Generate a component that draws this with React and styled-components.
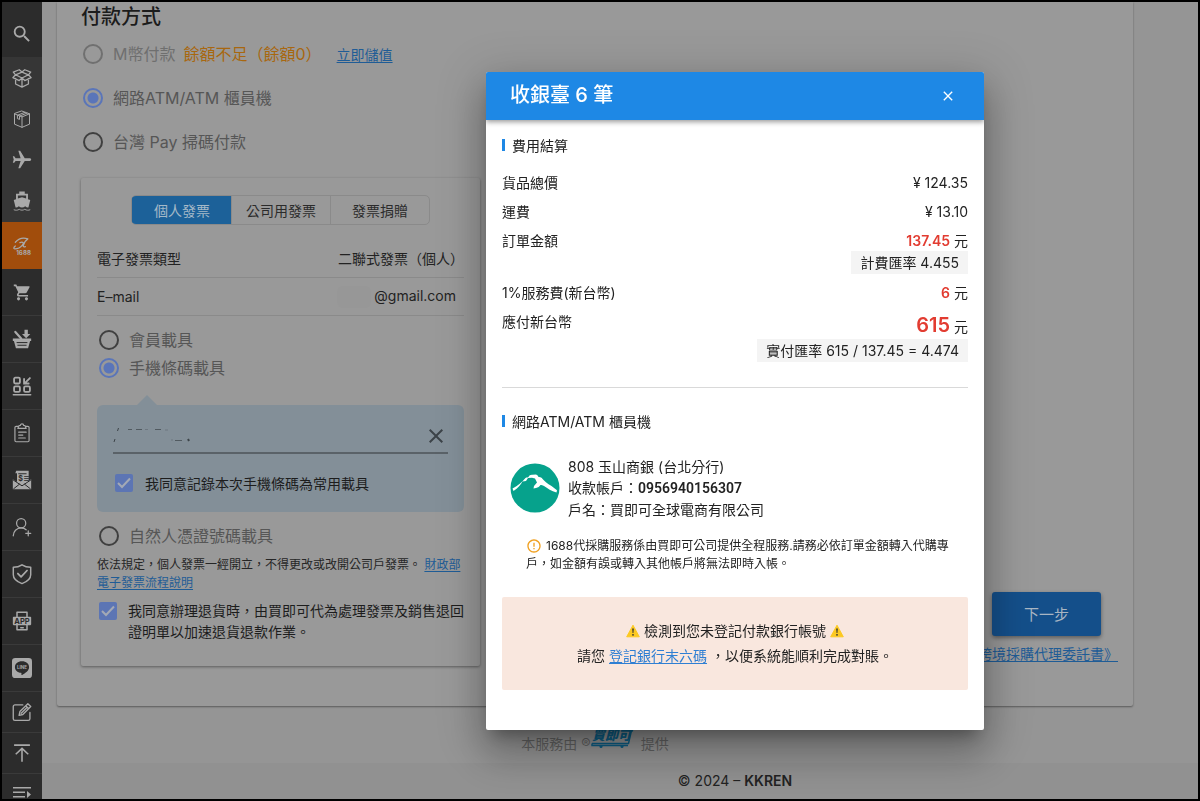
import React from "react";
import styled, { createGlobalStyle, css } from "styled-components";
import {
  MdSearch,
  MdShoppingCart,
  MdFlight,
  MdClose,
  MdErrorOutline,
} from "react-icons/md";

const GlobalStyle = createGlobalStyle`
  *, *::before, *::after { box-sizing: border-box; }
  body {
    margin: 0;
    background: #000;
    color: #222;
    font-family: Inter, "Noto Sans CJK TC", "Liberation Sans", sans-serif;
    font-size: 14px;
    line-height: 21px;
  }
  button, input { font: inherit; color: inherit; }
`;

const Frame = styled.div`
  display: flex;
  height: 100vh;
  border: 2px solid #000;
  overflow: hidden;
  background: #959595;
`;

/* ---------- side navigation ---------- */

const Side = styled.nav`
  flex: 0 0 40px;
  display: flex;
  flex-direction: column;
  overflow: hidden;
  background: #2c2c2c;
`;

const SideGroup = styled.div`
  flex: none;
  padding-bottom: 1px;
  background: #363636;
`;

const heights = { search: 55, group: 41, tall: 47, short: 41 };

const SideButton = styled.button`
  flex: none;
  display: flex;
  align-items: center;
  justify-content: center;
  width: 100%;
  height: ${(p) => heights[p.$kind]}px;
  padding: ${(p) => (p.$kind === "search" ? "9px 0 0" : "0")};
  border: 0;
  border-bottom: ${(p) => (p.$line ? "1px solid #3a3a3a" : "0")};
  background: ${(p) => (p.$active ? "#a14d0c" : "transparent")};
  color: #a9a9a9;
`;

/* ---------- page ---------- */

const Main = styled.main`
  flex: 1;
  min-width: 0;
  display: flex;
  flex-direction: column;
`;

const Card = styled.section`
  display: flex;
  justify-content: space-between;
  margin: 0 65px 0 15px;
  padding: 0 15px 40px 24px;
  background: #999;
  box-shadow: 0 1px 2px rgba(0, 0, 0, 0.4);
  border-radius: 0 0 2px 2px;
`;

const Payment = styled.div`
  flex: 0 0 399px;
`;

const Title = styled.h2`
  margin: 0;
  font-size: 20px;
  line-height: 30px;
  font-weight: 500;
  color: #1c1c1c;
`;

const Choice = styled.div`
  display: flex;
  align-items: center;
  height: ${(p) => (p.$inner ? 28 : 44)}px;
  padding-left: 2px;
  font-size: 16px;
  color: ${(p) => (p.$muted ? "#6f6f6f" : "#565656")};

  label { margin-left: 10px; }
`;

const Radio = styled.input.attrs({ type: "radio" })`
  appearance: none;
  flex: none;
  width: 20px;
  height: 20px;
  margin: 0;
  border: 2px solid #404040;
  border-radius: 50%;

  &:disabled { border-color: #707070; }
  &:checked {
    border-color: #5a75b9;
    background: radial-gradient(circle, #5a75b9 0 5px, transparent 6px);
  }
`;

const Notice = styled.span`
  margin-left: 8px;
  color: #a8670f;
`;

const Link = styled.a`
  color: ${(p) => (p.$bright ? "#2f7fd3" : "#1f5c96")};
  text-decoration: underline;
  text-underline-offset: 2px;
`;

const TopUp = styled(Link)`
  margin-left: 15px;
  font-size: 14px;
`;

const Invoice = styled.div`
  margin-top: 14px;
  padding: 17px 16px 24px;
  background: #999;
  border-radius: 2px;
  box-shadow: 0 1px 3px rgba(0, 0, 0, 0.4);
`;

const Tabs = styled.div`
  display: grid;
  grid-template-columns: repeat(3, 1fr);
  width: 299px;
  height: 30px;
  margin: 0 auto 15px;
  border: 1px solid #8a8a8a;
  border-radius: 5px;
  overflow: hidden;
`;

const Tab = styled.button`
  padding: 0;
  border: 0;
  border-left: 1px solid ${(p) => (p.$active ? "#1c6199" : "#8a8a8a")};
  background: ${(p) => (p.$active ? "#1c6199" : "transparent")};
  color: ${(p) => (p.$active ? "#a5b9c8" : "#2b2b2b")};
`;

const InfoRow = styled.div`
  display: flex;
  justify-content: space-between;
  align-items: center;
  height: 38px;
  border-bottom: 1px solid #8a8a8a;
`;

const Email = styled.span`
  padding-right: 8px;
`;

const Mask = styled.span`
  display: inline-block;
  width: 34px;
  height: 22px;
  margin-right: 3px;
  border-radius: 6px;
  background: #979797;
  vertical-align: middle;
`;

const Carriers = styled.div`
  padding-top: 10px;
`;

const Bubble = styled.div`
  position: relative;
  margin: 23px 0 10px;
  padding: 14px 16px 17px;
  border-radius: 6px;
  background: #838f98;

  &::before {
    content: "";
    position: absolute;
    left: 40px;
    top: -10px;
    border: 10px solid transparent;
    border-top: 0;
    border-bottom-color: #838f98;
  }
`;

const CodeField = styled.div`
  position: relative;
  display: flex;
  align-items: center;
  height: 35px;
  margin-bottom: 17px;
  border-bottom: 2px solid #5a6268;

  input {
    flex: 1;
    min-width: 0;
    border: 0;
    outline: 0;
    background: transparent;
  }
  button {
    display: flex;
    padding: 0;
    border: 0;
    background: transparent;
    color: #3c4348;
  }
`;

const Traces = styled.svg`
  position: absolute;
  left: 0;
  top: 8px;
`;

const Agree = styled.div`
  display: flex;
  align-items: ${(p) => (p.$multi ? "flex-start" : "center")};
  min-height: 24px;
  padding-left: 2px;
  margin-top: ${(p) => (p.$multi ? 8 : 0)}px;
  color: #1d1d1d;

  label { margin-left: ${(p) => (p.$multi ? 11 : 12)}px; }
`;

const Tick = styled.span`
  position: relative;
  flex: none;
  display: flex;
  margin-top: ${(p) => (p.$multi ? 2 : 0)}px;

  input {
    appearance: none;
    width: 18px;
    height: 18px;
    margin: 0;
    border-radius: 2px;
    background: #5c75b4;
  }
  svg {
    position: absolute;
    inset: 0;
    pointer-events: none;
  }
`;

const Small = styled.p`
  margin: 6px 0 0;
  font-size: 12px;
  line-height: 18px;
  color: #262626;
`;

const NextStep = styled.div`
  align-self: flex-end;
  display: flex;
  flex-direction: column;
  align-items: flex-end;
  gap: 7px;
  padding-bottom: 2px;
`;

const NextButton = styled.button`
  width: 109px;
  height: 44px;
  margin-right: 17px;
  border: 0;
  border-radius: 3px;
  background: #144f8a;
  color: #a9b6c3;
  font-size: 15px;
  box-shadow: 0 2px 4px rgba(0, 0, 0, 0.4);
`;

const Service = styled.div`
  display: flex;
  align-items: center;
  justify-content: center;
  flex: 1;
  margin: 0 65px 0 15px;
  padding-top: 18px;
  color: #636363;

  svg { margin: -11px 6px 0 0; }
`;

const Footer = styled.footer`
  padding-left: 230px;
  line-height: 36px;
  text-align: center;
  background: #919191;
  color: #222;

  b { font-weight: 600; }
`;

/* ---------- dialog ---------- */

const Overlay = styled.div`
  position: fixed;
  inset: 0;
  display: flex;
  align-items: center;
  justify-content: center;
  padding-left: 270px;
`;

const Dialog = styled.section`
  width: 498px;
  max-width: 90%;
  background: #fff;
  border-radius: 2px;
  overflow: hidden;
  box-shadow: 0 11px 15px -7px rgba(0, 0, 0, 0.3), 0 24px 38px 3px rgba(0, 0, 0, 0.2),
    0 9px 46px 8px rgba(0, 0, 0, 0.16);
`;

const DialogHead = styled.header`
  position: relative;
  display: flex;
  align-items: center;
  justify-content: space-between;
  height: 48px;
  padding: 0 28px 0 24px;
  background: #1e88e5;
  color: #fff;
  box-shadow: 0 2px 5px rgba(0, 0, 0, 0.4);

  h1 {
    margin: 0;
    font-size: 20px;
    font-weight: 500;
  }
  button {
    display: flex;
    padding: 0;
    border: 0;
    background: transparent;
  }
`;

const DialogBody = styled.div`
  padding: 15px 16px 40px;
`;

const SectionTitle = styled.h3`
  display: flex;
  align-items: center;
  gap: 7px;
  margin: 0 0 ${(p) => p.$gap}px;
  font-size: 14px;
  font-weight: 400;

  &::before {
    content: "";
    width: 3px;
    height: 12px;
    background: #1e88e5;
  }
`;

const Fee = styled.div`
  display: flex;
  justify-content: space-between;
  align-items: flex-start;
  padding: 4px 0;
`;

const Value = styled.div`
  display: flex;
  flex-direction: column;
  align-items: flex-end;
`;

const Amount = styled.strong`
  color: #e23c31;
  font-weight: 600;
  ${(p) =>
    p.$large &&
    css`
      font-size: 20px;
      line-height: 28px;
    `}
`;

const Rate = styled.span`
  padding: 1px 9px;
  background: #f4f4f4;
`;

const Rule = styled.hr`
  margin: 21px 0 23px;
  border: 0;
  border-top: 1px solid #d9d9d9;
`;

const Bank = styled.div`
  display: flex;
  align-items: center;
  gap: 8px;
  padding-left: 8px;

  b {
    font-family: Roboto, "Liberation Sans", sans-serif;
    font-weight: 600;
  }
`;

const BankNote = styled.p`
  margin: 17px 16px 24px 24px;
  font-size: 12px;
  line-height: 18px;

  svg {
    margin-right: 4px;
    color: #f0a020;
    vertical-align: -4px;
  }
`;

const Alert = styled.div`
  padding: 21px 16px 22px;
  background: #f9e7de;
  border-radius: 2px;
  line-height: 25px;
  text-align: center;

  svg { vertical-align: -2px; }
`;

/* ---------- drawings ---------- */

const Icon = ({ size = 20, box = 24, width = 1.4, children }) => (
  <svg
    width={size}
    height={size}
    viewBox={`0 0 ${box} ${box}`}
    fill="none"
    stroke="currentColor"
    strokeWidth={width}
    strokeLinecap="round"
    strokeLinejoin="round"
    aria-hidden="true"
  >
    {children}
  </svg>
);

const OpenBox = () => (
  <Icon size={22}>
    <path d="M5 8.5l7 3.5 7-3.5-7-3zM5 12.5v6l7 3.5 7-3.5v-6M12 12v10M5 8.5L2 11.6l7 3.2 3-2.8M19 8.5l3 3.1-7 3.2-3-2.8M5 8.5L2.5 5.500 9 3l3 2.500M19 8.500l2.500-3L15 3l-3 2.500" />
  </Icon>
);

const ClosedBox = () => (
  <Icon size={20} width={1.2}>
    <path d="M12 2.500l9 3.300v12.400l-9 3.800-9-3.800V5.800zM3 5.800l9 3.700 9-3.700M12 9.500V22M15.500 4L6.500 7.500v4l2.500 1V8.500L18 5" />
  </Icon>
);

const Logo1688 = () => (
  <Icon size={20} width={1.5}>
    <path d="M9.500 8c4-1.500 5 .5 3 3-2.500 3-6 4.500-9 4.500-2-.2-1.500-2 .5-3.500M4 7.500C8 3 14 1.800 19 3.500c-3 2-5 5-5.500 8-.2 1.500 1 2 2.500 1.200" />
    <text x="5" y="22.500" fontSize="7.500" fontWeight="700" fill="currentColor" stroke="none">1688</text>
  </Icon>
);

const BasketIn = () => (
  <Icon size={20}>
    <path
      fill="currentColor"
      stroke="none"
      d="M15 1h4v5h3l-5 5-5-5h3zM1 11.500h22v2.800h-1.300L19.300 23H4.700L2.300 14.300H1z"
    />
    <path d="M4 3.500l7 8" strokeWidth="2.600" />
    <path d="M6 16.300h12M7 19.500h10" stroke="#2c2c2c" strokeWidth="1.200" />
  </Icon>
);

const GridIn = () => (
  <Icon size={20} width={2.2}>
    <rect x="2.500" y="2" width="7" height="7" rx="1.500" />
    <rect x="2.500" y="12.500" width="7" height="6.500" rx="1.500" />
    <rect x="14.500" y="12.500" width="7" height="6.500" rx="1.500" />
    <path d="M1.500 22.500h21" strokeWidth="1.600" />
    <path d="M21.500 2.500L16 8M14.500 3.500V9H20" strokeLinejoin="miter" />
  </Icon>
);

const Clipboard = () => (
  <Icon size={20} width={1.4}>
    <path d="M7.500 4H5a1.500 1.500 0 00-1.500 1.500V21A1.500 1.500 0 005 22.500h14a1.500 1.500 0 001.500-1.500V5.500A1.500 1.500 0 0019 4h-2.500" />
    <path d="M7 6.500l1.500-3.500H10a2 2 0 014 0h1.500L17 6.500zM8 11h9M8 14.500h5M8 18h8" />
  </Icon>
);

const Bill = () => (
  <Icon size={20} box={24}>
    <path
      fill="currentColor"
      stroke="none"
      d="M5 1h15v12l3-2v12H1V11l5 3.500V4H4zM5 1v3"
    />
    <path d="M1.500 12l10.500 7 10.500-7M2 22.500l7-5.500M22 22.500l-7-5.500M8 4.500h9" stroke="#2c2c2c" strokeWidth="1.200" />
    <text x="7.500" y="13.500" fontSize="8.500" fontWeight="700" fill="#2c2c2c" stroke="none">$≡</text>
  </Icon>
);

const UserAdd = () => (
  <Icon size={20} width={1.5}>
    <circle cx="11" cy="7.500" r="5.500" />
    <path d="M1.500 22.500c0-5 4-9.500 9.500-9.500 2.500 0 4.500.8 6 2.300M19.500 16.500v6M16.500 19.500h6" />
  </Icon>
);

const Shield = () => (
  <Icon size={22} width={1.600}>
    <path d="M12 2C9 4 6 4.700 2.500 4.700v8C2.500 17.500 7 20.500 12 22.500c5-2 9.500-5 9.500-9.800v-8C18 4.700 15 4 12 2z" />
    <path d="M7.500 11.500l3.500 3.700 6.500-7" strokeWidth="1.900" />
  </Icon>
);

const AppPhone = () => (
  <Icon size={20} width={1.800}>
    <path d="M6 7V1.500h12V7M6 17v5.500h12V17M10.500 20h3" />
    <rect x="1" y="7" width="22" height="10" rx="1" fill="currentColor" stroke="none" />
    <text x="12" y="15.300" textAnchor="middle" fontSize="9" fontWeight="700" fill="#2c2c2c" stroke="none">APP</text>
  </Icon>
);

const LineLogo = () => (
  <svg width="20" height="20" viewBox="0 0 24 24" aria-hidden="true">
    <rect width="24" height="24" rx="4" fill="currentColor" />
    <path d="M12 4c-5 0-8.500 3.200-8.500 7 0 3.500 3 6.300 7.300 6.800.9.200.5 1.600.5 2.200 0 .4.400.6.800.3 4-2.300 8.400-5.300 8.400-9.300 0-3.800-3.500-7-8.500-7z" fill="#2c2c2c" />
    <text x="12" y="13.200" textAnchor="middle" fontSize="5.500" fontWeight="700" fill="#a9a9a9">LINE</text>
  </svg>
);

const Compose = () => (
  <Icon size={20} width={1.600}>
    <path d="M13 3.500H3.500a2 2 0 00-2 2V20a2 2 0 002 2h16a2 2 0 002-2v-7.500" />
    <path d="M8.500 16l1-4.500L19 2l3.500 3.500L13 15zM16.500 4.500L20 8M11 13.500L18 6.500" />
  </Icon>
);

const ToTop = () => (
  <Icon size={20} width={1.900}>
    <path d="M2.500 2.500h19M12 22.500V6.500M4.500 13.500L12 6.500l7.500 7" strokeLinecap="butt" strokeLinejoin="miter" />
  </Icon>
);

const Expand = () => (
  <svg width="18" height="16" viewBox="0 0 18 16" aria-hidden="true" fill="currentColor">
    <path d="M0 1h18v1.500H0zM0 5.500h12V7H0zM0 10h12v1.500H0zM0 14h18v1.500H0zM14 5l4 3.500-4 3.500z" />
  </svg>
);

const TurnedPlane = styled(MdFlight)`
  transform: rotate(90deg);
`;

const Ship = () => (
  <svg width="22" height="22" viewBox="0 0 24 24" aria-hidden="true" fill="currentColor">
    <path
      fillRule="evenodd"
      d="M9 1.500h6V4h3.500v6l2.500 1-2 8c-1.200.2-2.400-.3-3.500-1.300-2.200 1.700-4.800 1.700-7 0-1.100 1-2.300 1.500-3.500 1.300L3 11l2.500-1V4H9zM7.500 6v3.300L12 8l4.500 1.300V6z"
    />
    <path d="M3 21.500c2 .8 4 .8 6-.4 2 1.200 4 1.200 6 0 2 1.200 4 1.200 6 .4" fill="none" stroke="currentColor" />
  </svg>
);

const BankLogo = () => (
  <svg width="50" height="50" viewBox="0 0 50 50" role="img" aria-label="玉山商銀">
    <circle cx="25" cy="25" r="24.500" fill="#06a28c" />
    <path
      d="M2.500 25.500C8 22.500 12 19 15.500 15c1.500-.8 2.500-.5 3-1 .8-1.800 2-2.500 4-2.300l3.500-.2c1.500.5 2 1.500 2.500 2.500 1-.2 2 0 3 .8 2.500 3 6 6 10 8.200l5.500 4.200-.5 2.300c-5-1.500-9-4-12.500-6.500-1.500-.8-2.500-1-3.500-1-1 1.500-2.500 2.500-4.500 3l-2.500.5.500-2.500 3-3.500-2-4-3-.8-4 .3-2 3-3.500.5C11 21.500 8 25 3.500 28z"
      fill="#fff"
    />
  </svg>
);

const Warning = () => (
  <svg width="14" height="14" viewBox="0 0 14 14" role="img" aria-label="注意">
    <path d="M7 1.200L13.300 12.800H.7z" fill="#fcc921" stroke="#fcc921" strokeLinejoin="round" />
    <path d="M6.200 4.500h1.600L7.400 9H6.600z" fill="#333" />
    <circle cx="7" cy="10.800" r=".9" fill="#333" />
  </svg>
);

const ShopLogo = () => (
  <svg width="44" height="24" viewBox="0 0 44 24" role="img" aria-label="買即可">
    <text x="1" y="14" fontSize="13" fontWeight="900" fontStyle="italic" fill="#0d5f86">買即可</text>
    <path d="M1 17.500h36.500L41 2l3-1M1 17.500v2h36" fill="none" stroke="#0d5f86" strokeWidth="1.500" />
    <circle cx="10" cy="20.500" r="1.500" fill="#0d5f86" />
    <circle cx="31" cy="20.500" r="1.500" fill="#0d5f86" />
  </svg>
);

const Checkbox = ({ id, multi, children }) => (
  <Agree $multi={multi}>
    <Tick $multi={multi}>
      <input id={id} type="checkbox" defaultChecked />
      <svg width="18" height="18" viewBox="0 0 18 18" fill="none" stroke="#a3a9b5" strokeWidth="2" aria-hidden="true">
        <path d="M3 9l4 4 8-8.500" />
      </svg>
    </Tick>
    <label htmlFor={id}>{children}</label>
  </Agree>
);

const groupIcons = [
  ["開箱", <OpenBox />],
  ["包裹", <ClosedBox />],
  ["空運", <TurnedPlane size={22} />],
  ["海運", <Ship />],
];

const navIcons = [
  ["購物車", <MdShoppingCart size={19} />, "tall"],
  ["加入採購", <BasketIn />, "tall"],
  ["入庫", <GridIn />, "tall"],
  ["訂單", <Clipboard />, "tall"],
  ["帳單", <Bill />, "tall"],
  ["會員", <UserAdd />, "tall"],
  ["安全", <Shield />, "tall"],
  ["下載", <AppPhone />, "tall"],
  ["客服", <LineLogo />, "tall"],
  ["意見", <Compose />, "short"],
  ["回頂端", <ToTop />, "short"],
  ["展開", <Expand />, "short"],
];

export default function App() {
  return (
    <>
      <GlobalStyle />
      <Frame>
        <Side>
          <SideButton $kind="search" aria-label="搜尋">
            <MdSearch size={22} />
          </SideButton>
          <SideGroup>
            {groupIcons.map(([name, icon]) => (
              <SideButton key={name} $kind="group" aria-label={name}>
                {icon}
              </SideButton>
            ))}
          </SideGroup>
          <SideButton $kind="tall" $active aria-label="1688">
            <Logo1688 />
          </SideButton>
          {navIcons.map(([name, icon, kind]) => (
            <SideButton key={name} $kind={kind} $line aria-label={name}>
              {icon}
            </SideButton>
          ))}
        </Side>

        <Main>
          <Card>
            <Payment>
              <Title>付款方式</Title>
              <Choice $muted>
                <Radio id="pay-m" name="pay" disabled />
                <label htmlFor="pay-m">M幣付款</label>
                <Notice>餘額不足（餘額0）</Notice>
                <TopUp href="#topup">立即儲值</TopUp>
              </Choice>
              <Choice>
                <Radio id="pay-atm" name="pay" defaultChecked />
                <label htmlFor="pay-atm">網路ATM/ATM 櫃員機</label>
              </Choice>
              <Choice>
                <Radio id="pay-tw" name="pay" />
                <label htmlFor="pay-tw">台灣 Pay 掃碼付款</label>
              </Choice>

              <Invoice>
                <Tabs>
                  <Tab $active>個人發票</Tab>
                  <Tab>公司用發票</Tab>
                  <Tab>發票捐贈</Tab>
                </Tabs>
                <InfoRow>
                  <span>電子發票類型</span>
                  <span>二聯式發票（個人）</span>
                </InfoRow>
                <InfoRow>
                  <span>E–mail</span>
                  <Email>
                    <Mask />
                    @gmail.com
                  </Email>
                </InfoRow>
                <Carriers>
                  <Choice $inner>
                    <Radio id="car-member" name="carrier" />
                    <label htmlFor="car-member">會員載具</label>
                  </Choice>
                  <Choice $inner>
                    <Radio id="car-phone" name="carrier" defaultChecked />
                    <label htmlFor="car-phone">手機條碼載具</label>
                  </Choice>
                  <Bubble>
                    <CodeField>
                      <input aria-label="手機條碼" />
                      <button aria-label="清除">
                        <MdClose size={24} />
                      </button>
                      <Traces width="84" height="18" viewBox="0 0 84 18" fill="none" stroke="#3c4348" aria-hidden="true">
                        <path d="M5.500 1L4.500 4M1 15l1-3" />
                        <path d="M15 2.500h4M23 2.500h6M42 2.500h6M62 13.500h7" opacity=".7" />
                        <path d="M75 12l1 2" strokeWidth="2" />
                        <path d="M32 2.500h3M52 3h3M58 13h2" opacity=".3" />
                      </Traces>
                    </CodeField>
                    <Checkbox id="save-code">我同意記錄本次手機條碼為常用載具</Checkbox>
                  </Bubble>
                  <Choice $inner>
                    <Radio id="car-cert" name="carrier" />
                    <label htmlFor="car-cert">自然人憑證號碼載具</label>
                  </Choice>
                </Carriers>
                <Small>
                  依法規定，個人發票一經開立，不得更改或改開公司戶發票。{" "}
                  <Link href="#einvoice">財政部電子發票流程說明</Link>
                </Small>
                <Checkbox id="agree-return" multi>
                  我同意辦理退貨時，由買即可代為處理發票及銷售退回證明單以加速退貨退款作業。
                </Checkbox>
              </Invoice>
            </Payment>

            <NextStep>
              <NextButton>下一步</NextButton>
              <Link href="#terms">《跨境採購代理委託書》</Link>
            </NextStep>
          </Card>

          <Service>
            本服務由 ®<ShopLogo /> 提供
          </Service>
          <Footer>
            © 2024 – <b>KKREN</b>
          </Footer>
        </Main>
      </Frame>

      <Overlay>
        <Dialog role="dialog" aria-labelledby="cashier-title">
          <DialogHead>
            <h1 id="cashier-title">收銀臺 6 筆</h1>
            <button aria-label="關閉">
              <MdClose size={16} />
            </button>
          </DialogHead>
          <DialogBody>
            <SectionTitle $gap={12}>費用結算</SectionTitle>
            <Fee>
              <span>貨品總價</span>
              <span>¥ 124.35</span>
            </Fee>
            <Fee>
              <span>運費</span>
              <span>¥ 13.10</span>
            </Fee>
            <Fee>
              <span>訂單金額</span>
              <Value>
                <span>
                  <Amount>137.45</Amount> 元
                </span>
                <Rate>計費匯率 4.455</Rate>
              </Value>
            </Fee>
            <Fee>
              <span>1%服務費(新台幣)</span>
              <span>
                <Amount>6</Amount> 元
              </span>
            </Fee>
            <Fee>
              <span>應付新台幣</span>
              <Value>
                <span>
                  <Amount $large>615</Amount> 元
                </span>
                <Rate>實付匯率 615 / 137.45 = 4.474</Rate>
              </Value>
            </Fee>
            <Rule />
            <SectionTitle $gap={24}>網路ATM/ATM 櫃員機</SectionTitle>
            <Bank>
              <BankLogo />
              <div>
                808 玉山商銀 (台北分行)
                <br />
                收款帳戶：<b>0956940156307</b>
                <br />
                戶名：買即可全球電商有限公司
              </div>
            </Bank>
            <BankNote>
              <MdErrorOutline size={16} />
              1688代採購服務係由買即可公司提供全程服務.請務必依訂單金額轉入代購專戶，如金額有誤或轉入其他帳戶將無法即時入帳。
            </BankNote>
            <Alert>
              <Warning /> 檢測到您未登記付款銀行帳號 <Warning />
              <br />
              請您 <Link $bright href="#register">登記銀行末六碼</Link> ，以便系統能順利完成對賬。
            </Alert>
          </DialogBody>
        </Dialog>
      </Overlay>
    </>
  );
}
